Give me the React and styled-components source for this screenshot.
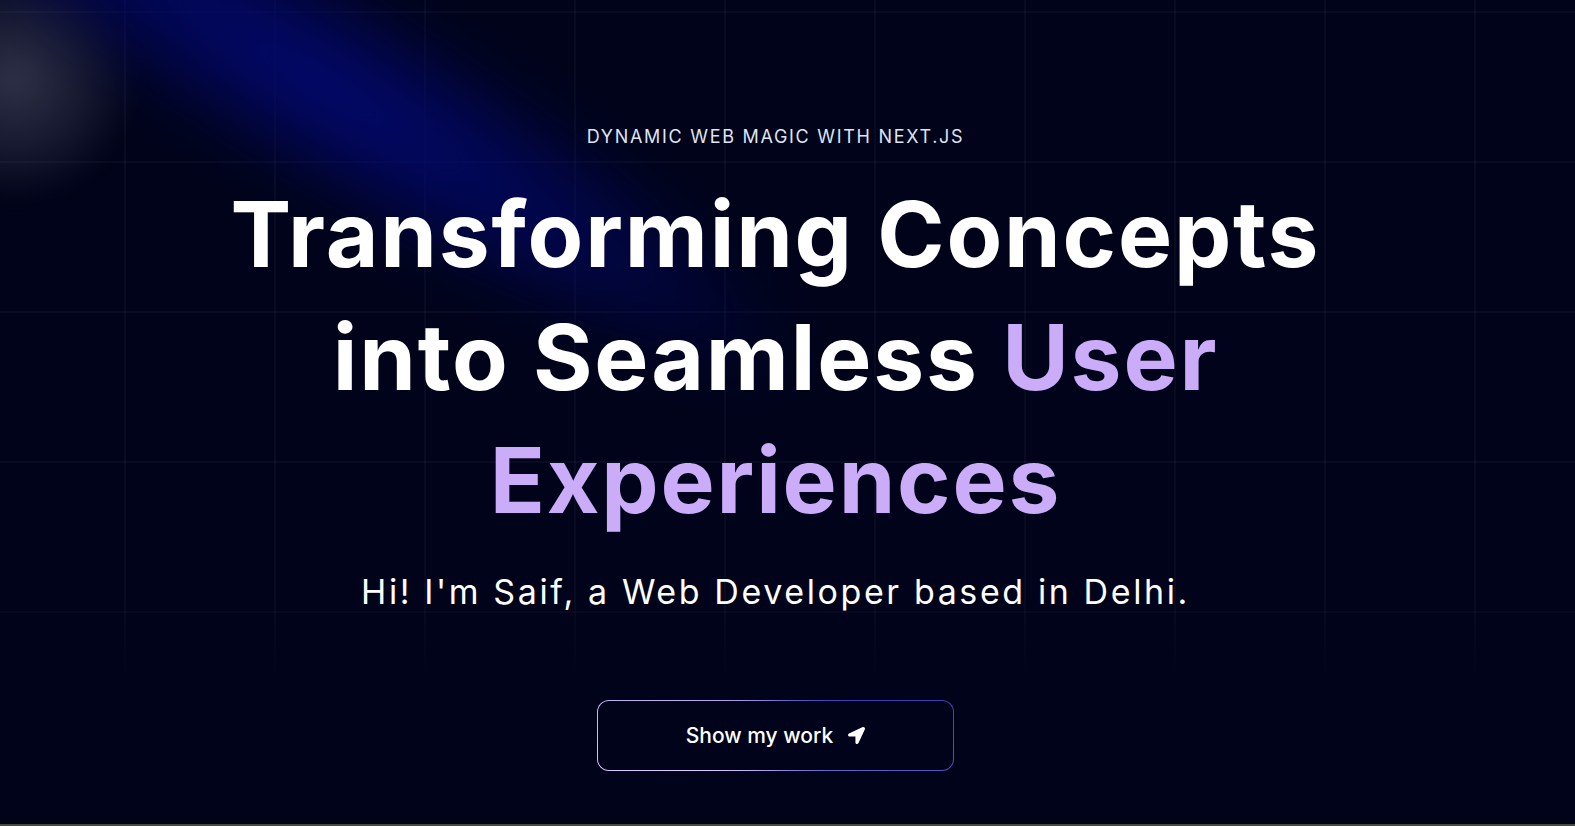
import * as React from "react";
import styled, { createGlobalStyle } from "styled-components";
import { FaLocationArrow } from "react-icons/fa";

const GlobalStyle = createGlobalStyle`
  html, body {
    margin: 0;
    padding: 0;
    background-color: #000319;
    font-family: Inter, "Noto Sans", sans-serif;
    overflow: hidden;
  }
`;

const Page = styled.div`
  width: 100vw;
  min-height: 826px;
  display: flex;
  flex-direction: column;
  background-color: #000319;
`;

const Hero = styled.section`
  position: relative;
  height: 824px;
  overflow: hidden;
  display: flex;
  flex-direction: column;
  align-items: center;
  padding: 124px 24px 0 0;
  box-sizing: border-box;
`;

const Grid = styled.div`
  position: absolute;
  inset: 0;
  pointer-events: none;
  background-image: linear-gradient(
      to right,
      rgba(255, 255, 255, 0.035) 2px,
      transparent 2px
    ),
    linear-gradient(to bottom, rgba(255, 255, 255, 0.035) 2px, transparent 2px);
  background-size: 150px 150px;
  background-position: 124px 11px;
  mask-image: linear-gradient(to bottom, #000 72%, transparent 84%);
`;

const Glow = styled.div`
  position: absolute;
  left: -110px;
  top: -45px;
  width: 250px;
  height: 250px;
  border-radius: 50%;
  background: radial-gradient(
    circle at center,
    rgba(210, 215, 235, 0.22) 0%,
    rgba(210, 215, 235, 0.1) 40%,
    transparent 70%
  );
  filter: blur(10px);
  pointer-events: none;
`;

const Beam = styled.div`
  position: absolute;
  left: -110px;
  top: 20px;
  width: 1000px;
  height: 210px;
  transform: rotate(31deg);
  background: radial-gradient(
    ellipse at 42% 50%,
    rgba(2, 8, 120, 0.95) 0%,
    rgba(2, 8, 105, 0.6) 38%,
    transparent 70%
  );
  filter: blur(30px);
  pointer-events: none;
`;

const Content = styled.div`
  position: relative;
  display: flex;
  flex-direction: column;
  align-items: center;
  text-align: center;
`;

const Eyebrow = styled.p`
  margin: 0;
  font-size: 18px;
  line-height: 26px;
  letter-spacing: 0.095em;
  text-transform: uppercase;
  color: #dfe4f4;
`;

const Heading = styled.h1`
  margin: 23px 0 0;
  font-size: 91px;
  line-height: 123px;
  font-weight: 700;
  letter-spacing: 0.02em;
  color: #ffffff;
`;

const Line = styled.span`
  display: block;
  white-space: nowrap;
`;

const Word = styled.span`
  color: ${(p) => (p.accent ? "#cbacf9" : "#ffffff")};
`;

const Subtitle = styled.p`
  margin: 29px 0 0;
  font-size: 34px;
  line-height: 41px;
  letter-spacing: 2.6px;
  color: #ffffff;
`;

const ButtonFrame = styled.button`
  margin-top: 88px;
  width: 357px;
  height: 71px;
  padding: 1px;
  border: none;
  border-radius: 12px;
  background: conic-gradient(
    from -110deg at 50% 50%,
    #e2cbff 0%,
    #393bb2 50%,
    #e2cbff 100%
  );
  cursor: pointer;
  box-sizing: border-box;
`;

const ButtonInner = styled.span`
  display: flex;
  align-items: center;
  justify-content: center;
  gap: 15px;
  width: 100%;
  height: 100%;
  border-radius: 11px;
  background-color: #000319;
  color: #ffffff;
  font-family: Inter, sans-serif;
  font-size: 21px;
  font-weight: 500;
  svg {
    width: 17px;
    height: 17px;
  }
`;

const BottomStrip = styled.div`
  height: 2px;
  background-color: #474a3f;
`;

export default function App() {
  return (
    <Page>
      <GlobalStyle />
      <Hero>
        <Grid />
        <Glow />
        <Beam />
        <Content>
          <Eyebrow>Dynamic Web Magic with Next.js</Eyebrow>
          <Heading>
            <Line>Transforming Concepts</Line>
            <Line>
              into Seamless <Word accent>User</Word>
            </Line>
            <Line>
              <Word accent>Experiences</Word>
            </Line>
          </Heading>
          <Subtitle>Hi! I'm Saif, a Web Developer based in Delhi.</Subtitle>
          <ButtonFrame>
            <ButtonInner>
              Show my work
              <FaLocationArrow />
            </ButtonInner>
          </ButtonFrame>
        </Content>
      </Hero>
      <BottomStrip />
    </Page>
  );
}
